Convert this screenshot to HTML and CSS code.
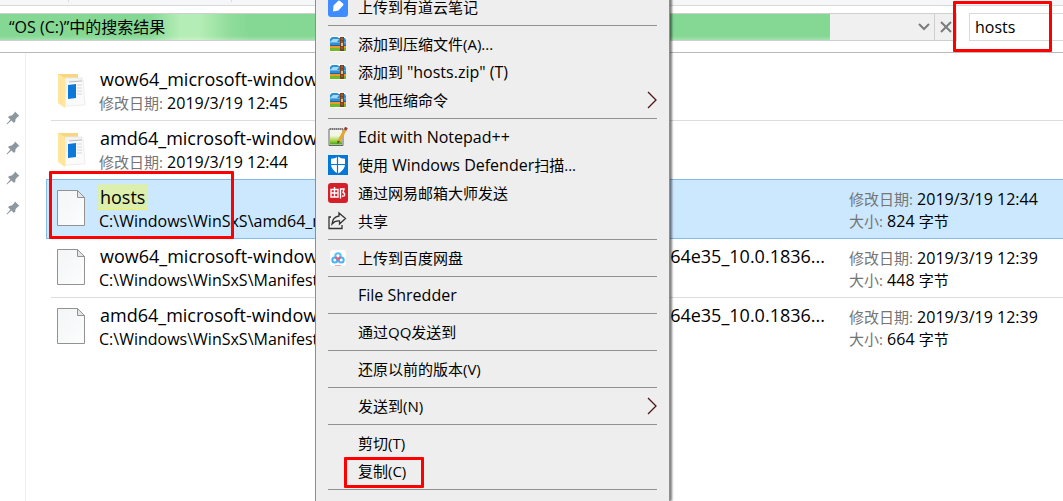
FILE: index.html
```html
<!DOCTYPE html>
<html lang="zh-CN">
<head>
    <meta charset="UTF-8">
    <meta name="viewport" content="width=device-width, initial-scale=1.0">
    <title>hosts - 搜索结果</title>
    <link rel="stylesheet" href="styles.css">
</head>
<body>

<!-- shared icons -->
<svg class="sprite" aria-hidden="true">
    <symbol id="pin" viewBox="0 0 14 14">
        <path d="M9 0.5 13.5 5 12 5.6 9.5 8.2 9.2 11 7.8 11.8 5.4 9.4 1 13.4 0.5 13 4.4 8.4 2.2 6.2 3 5 5.8 4.6 8.4 2Z" fill="#8d979e"/>
    </symbol>
    <symbol id="folder" viewBox="0 0 30 36">
        <path d="M1 1h20v27L7 34 1 29Z" fill="#f6d680"/>
        <path d="M8 5 25 5 25 29 8 31Z" fill="#f4f5f6" stroke="#e6e8ea"/>
        <path d="M10 8 26 7 28 32 8 33Z" fill="#fbfbfb" stroke="#eceeef"/>
        <path d="M12 9 25 8" stroke="#b9bdc0"/>
        <path d="M20 12h5M20 15h5M20 18h5M20 21h5" stroke="#d3d6d9"/>
        <path d="M11 12 19 11V25L11 26Z" fill="#0c78d8"/>
        <path d="M1 1 8 5V35L1 30Z" fill="#ffe69c"/>
    </symbol>
    <symbol id="file" viewBox="0 0 28 36">
        <linearGradient id="paper" x1="0" y1="0" x2="1" y2="1">
            <stop offset="0" stop-color="#f3f5f6"/>
            <stop offset="1" stop-color="#fcfdfd"/>
        </linearGradient>
        <path d="M0.5 0.5H20.5L27.5 7.5V35.5H0.5Z" fill="url(#paper)" stroke="#929292"/>
        <path d="M20.5 0.5V7.5H27.5Z" fill="#e6e6e6" stroke="#929292"/>
    </symbol>
    <symbol id="archive" viewBox="0 0 16 16">
        <path d="M0 0h16v16H0Z" fill="#f8f8f5"/>
        <path d="M0 3 2 1h5l2 1h6l1 2v6H0Z" fill="#2f8fd2"/>
        <path d="M0 6 3 3h6L7 6Z" fill="#a3dbf7"/>
        <path d="M0 6h16v1H0Z" fill="#5fb2e2"/>
        <path d="M0 9h16v1H0Z" fill="#1d66a3"/>
        <path d="M0 10h16v2H0Z" fill="#f09a2c"/>
        <path d="M0 12h16v3H0Z" fill="#6cb92a"/>
        <path d="M10 1h4v14h-4Z" fill="#7b401f"/>
        <path d="M12 2v12" stroke="#b9783f" stroke-dasharray="2 1"/>
        <path d="M11 7h2v3h-2Z" fill="#e0c18b"/>
    </symbol>
    <symbol id="arrow" viewBox="0 0 10 18">
        <path d="M1 1 9 9 1 17" fill="none" stroke="#4c1717" stroke-width="1.3"/>
    </symbol>
</svg>

<div class="explorer">
    <div class="ribbon"><i></i><i></i></div>

    <header class="toolbar">
        <div class="address">
            <div class="progress">“OS (C:)”中的搜索结果</div>
            <button class="history" aria-label="历史记录">
                <svg width="12" height="8" viewBox="0 0 12 8"><path d="M1 1 6 6 11 1" fill="none" stroke="#7c7c7c" stroke-width="2"/></svg>
            </button>
            <button class="stop" aria-label="停止">
                <svg width="12" height="12" viewBox="0 0 12 12"><path d="M1 1 11 11M11 1 1 11" fill="none" stroke="#7c7c7c" stroke-width="2"/></svg>
            </button>
        </div>
        <div class="search">
            <input type="text" value="hosts" aria-label="搜索">
            <div class="mark mark-search"></div>
        </div>
    </header>

    <main class="content">
        <nav class="sidebar">
            <svg><use href="#pin"/></svg>
            <svg><use href="#pin"/></svg>
            <svg><use href="#pin"/></svg>
            <svg><use href="#pin"/></svg>
        </nav>

        <ul class="results">
            <li class="row">
                <svg class="folder"><use href="#folder"/></svg>
                <div class="info">
                    <div class="name"><span>wow64_microsoft-window</span></div>
                    <div class="detail"><span class="label">修改日期:</span> 2019/3/19 12:45</div>
                </div>
            </li>
            <li class="row">
                <svg class="folder"><use href="#folder"/></svg>
                <div class="info">
                    <div class="name"><span>amd64_microsoft-window</span></div>
                    <div class="detail"><span class="label">修改日期:</span> 2019/3/19 12:44</div>
                </div>
            </li>
            <li class="row selected">
                <svg class="file"><use href="#file"/></svg>
                <div class="info">
                    <div class="name"><span class="match">hosts</span></div>
                    <div class="detail">C:\Windows\WinSxS\amd64_m</div>
                </div>
                <div class="meta">
                    <div><span class="label">修改日期:</span> 2019/3/19 12:44</div>
                    <div><span class="label">大小:</span> 824 <span class="unit">字节</span></div>
                </div>
                <div class="mark mark-file"></div>
            </li>
            <li class="row">
                <svg class="file"><use href="#file"/></svg>
                <div class="info">
                    <div class="name"><span>wow64_microsoft-window</span><span>64e35_10.0.1836...</span></div>
                    <div class="detail">C:\Windows\WinSxS\Manifest</div>
                </div>
                <div class="meta">
                    <div><span class="label">修改日期:</span> 2019/3/19 12:39</div>
                    <div><span class="label">大小:</span> 448 <span class="unit">字节</span></div>
                </div>
            </li>
            <li class="row">
                <svg class="file"><use href="#file"/></svg>
                <div class="info">
                    <div class="name"><span>amd64_microsoft-window</span><span>64e35_10.0.1836...</span></div>
                    <div class="detail">C:\Windows\WinSxS\Manifest</div>
                </div>
                <div class="meta">
                    <div><span class="label">修改日期:</span> 2019/3/19 12:39</div>
                    <div><span class="label">大小:</span> 664 <span class="unit">字节</span></div>
                </div>
            </li>
        </ul>
    </main>

    <div class="menu">
        <button class="item">
            <span class="icon"><svg width="20" height="20" viewBox="0 0 20 20"><rect width="20" height="20" rx="3" fill="#3f8cff"/><path d="M5 14.500 5.500 8.500 10 4Q11 3 12 4L15 6.500Q16 7.500 15 8.500L10.500 13.500Z" fill="#fff"/></svg></span>
            <span>上传到有道云笔记</span>
        </button>
        <hr>
        <button class="item">
            <span class="icon"><svg width="16" height="16"><use href="#archive"/></svg></span>
            <span>添加到压缩文件(A)...</span>
        </button>
        <button class="item">
            <span class="icon"><svg width="16" height="16"><use href="#archive"/></svg></span>
            <span>添加到 <span class="latin">"hosts.zip" (T)</span></span>
        </button>
        <button class="item">
            <span class="icon"><svg width="16" height="16"><use href="#archive"/></svg></span>
            <span>其他压缩命令</span>
            <svg class="more"><use href="#arrow"/></svg>
        </button>
        <hr>
        <button class="item">
            <span class="icon"><svg width="20" height="20" viewBox="0 0 20 20">
                <linearGradient id="npp" x1="0" y1="0" x2="0" y2="1"><stop offset="0.3" stop-color="#f2f6e4"/><stop offset="0.7" stop-color="#a3d642"/><stop offset="1" stop-color="#3f9e1c"/></linearGradient>
                <path d="M1 2H15V18.500H1Z" fill="#f4f4f0" stroke="#666"/>
                <path d="M2 5H14V17.500H2Z" fill="url(#npp)"/>
                <path d="M2 2H15" stroke="#777" stroke-width="2" stroke-dasharray="1 1"/>
                <path d="M17 3 11 14" stroke="#e5a82c" stroke-width="3"/>
                <path d="M18.500 0.500 17 3" stroke="#9c3836" stroke-width="3"/>
                <path d="M9.500 13.500 12 14.500 9.500 17Z" fill="#59451c"/>
            </svg></span>
            <span class="latin">Edit with Notepad++</span>
        </button>
        <button class="item">
            <span class="icon"><svg width="20" height="20" viewBox="0 0 20 20"><path d="M0 0h20v20H0Z" fill="#0078d7"/><path d="M10 1.500Q13 3.800 17 3.800V9Q17 15 10 18.500 3 15 3 9V3.800Q7 3.800 10 1.500Z" fill="#fff"/><path d="M9.500 1V19M2 9.500H18" stroke="#0078d7" stroke-width="1.200"/></svg></span>
            <span>使用 <span class="latin">Windows Defender</span>扫描...</span>
        </button>
        <button class="item">
            <span class="icon"><svg width="20" height="20" viewBox="0 0 20 20"><rect width="20" height="20" rx="3" fill="#d51f2b"/><path d="M3 6.500H10V14H3ZM6.500 4V14M3 10H10M12.500 15.500V6H16L15 9.500Q17 10 16.500 12.500 16 13.500 14 13" fill="none" stroke="#fff" stroke-width="1.400"/></svg></span>
            <span>通过网易邮箱大师发送</span>
        </button>
        <button class="item">
            <span class="icon"><svg width="20" height="20" viewBox="0 0 20 20"><path d="M3 6H1V17.500H14V14M11 2 17.500 7.500 11.500 13V10Q7 9.500 4 13 4.500 6 11 5Z" fill="none" stroke="#333" stroke-width="1.300"/></svg></span>
            <span>共享</span>
        </button>
        <hr>
        <button class="item">
            <span class="icon"><svg width="16" height="16" viewBox="0 0 16 16"><rect width="16" height="16" rx="3" fill="#fff"/><g fill="none" stroke-width="2"><circle cx="8" cy="6" r="2.700" stroke="#59c1f5"/><circle cx="4.800" cy="10" r="2.500" stroke="#45b4f4"/><circle cx="11.200" cy="10" r="2.500" stroke="#45b4f4"/><path d="M5.500 7 8 9.500 10.500 7" stroke="#ee5c78"/></g><path d="M5 15.500H11" stroke="#f4a5ae"/></svg></span>
            <span>上传到百度网盘</span>
        </button>
        <hr>
        <button class="item"><span class="icon"></span><span class="latin">File Shredder</span></button>
        <hr>
        <button class="item"><span class="icon"></span><span>通过QQ发送到</span></button>
        <hr>
        <button class="item"><span class="icon"></span><span>还原以前的版本(V)</span></button>
        <hr>
        <button class="item">
            <span class="icon"></span>
            <span>发送到(N)</span>
            <svg class="more"><use href="#arrow"/></svg>
        </button>
        <hr>
        <button class="item"><span class="icon"></span><span>剪切(T)</span></button>
        <button class="item"><span class="icon"></span><span>复制(C)</span><span class="mark mark-copy"></span></button>
        <hr>
    </div>
</div>

</body>
</html>
```
FILE: styles.css
```css
* {
    box-sizing: border-box;
}
body {
    margin: 0;
    font-family: "Open Sans", "Noto Sans CJK SC", sans-serif;
    font-size: 15px;
    line-height: 22px;
    color: #000;
    background: #fff;
}
button, input {
    font: inherit;
    color: inherit;
}
button {
    margin: 0;
    padding: 0;
    border: none;
    background: none;
}
svg {
    display: block;
    flex-shrink: 0;
}
.sprite {
    position: absolute;
    width: 0;
    height: 0;
}
.explorer {
    position: relative;
    height: 100vh;
    overflow: hidden;
}

/* top bars */
.ribbon {
    display: flex;
    height: 6px;
    background: #f5f6f7;
    border-bottom: 1px solid #d9dadb;
}
.ribbon i {
    width: 69px;
    height: 2px;
    border-right: 1px solid #dcdddf;
}
.ribbon i + i {
    width: 163px;
}
.toolbar {
    display: flex;
    gap: 12px;
    height: 47px;
    padding-top: 7px;
    border-bottom: 1px solid #b9b9b9;
}
.address {
    display: flex;
    flex: 1;
    height: 28px;
    border: 1px solid #cfcfcf;
    border-left: none;
    background: #f0f0f0;
}
.progress {
    flex: 1;
    padding-left: 9px;
    line-height: 26px;
    background:
        linear-gradient(to bottom, rgba(255, 255, 255, 0) 84%, rgba(255, 255, 255, 0.25)),
        linear-gradient(to right, #84d893 150px, #b4edb5 180px, #b4edb5 200px, #90dc9b 230px, #84d893 250px);
}
.history {
    display: flex;
    align-items: center;
    justify-content: flex-end;
    width: 105px;
    padding-right: 4px;
    border-right: 1px solid #cfcfcf;
}
.stop {
    display: flex;
    align-items: center;
    justify-content: center;
    width: 21px;
}
.search {
    position: relative;
    width: 94px;
}
.search input {
    width: 100%;
    height: 28px;
    padding: 0 5px;
    border: 1px solid #d9d9d9;
    border-right: none;
    background: #fff;
    outline: none;
}
.progress, .search input, .detail, .meta, .latin {
    font-size: 16px;
}

/* file list */
.content {
    display: flex;
    height: calc(100vh - 53px);
}
.sidebar {
    display: flex;
    flex-direction: column;
    gap: 16px;
    width: 26px;
    padding: 58px 0 0 6px;
    border-right: 1px solid #f0f0f0;
}
.sidebar svg {
    width: 14px;
    height: 14px;
}
.results {
    flex: 1;
    min-width: 0;
    margin: 0;
    padding: 9px 0 0 25px;
    list-style: none;
}
.row {
    position: relative;
    display: flex;
    height: 59px;
    padding-left: 6px;
    border-bottom: 1px solid #dcdcdc;
}
.row:last-child {
    border-bottom: none;
}
.row.selected {
    height: 60px;
    margin: -1px 0 0 -5px;
    padding-left: 10px;
    border: 1px solid #84bbe8;
    border-right: none;
    background: #cce8ff;
}
.folder {
    width: 30px;
    height: 36px;
    margin: 11px 12px 0 0;
}
.file {
    width: 28px;
    height: 36px;
    margin: 10px 14px 0 0;
}
.info {
    flex: 1;
    min-width: 0;
    padding: 5px 24px 0 0;
}
.name {
    display: flex;
    justify-content: space-between;
    padding-left: 1px;
    font-size: 18px;
    line-height: 25px;
    white-space: nowrap;
}
.detail {
    white-space: nowrap;
}
.match {
    margin-left: -3px;
    padding: 0 3px;
    border-radius: 2px;
    background: #dcefad;
    box-shadow: inset 0 0 0 1px #ecf36b;
}
.meta {
    width: 214px;
    padding-top: 8px;
}
.label {
    font-size: 15px;
    color: #757575;
}
.unit {
    font-size: 15px;
}

/* context menu */
.menu {
    position: absolute;
    top: -7px;
    bottom: 0;
    left: 315px;
    width: 355px;
    padding: 0 12px;
    border-left: 1px solid #8f8f8f;
    border-right: 1px solid #8f8f8f;
    background: #eee;
    box-shadow: 2px 0 2px rgba(0, 0, 0, 0.5);
    overflow: hidden;
}
.menu hr {
    height: 1px;
    margin: 4px 0;
    border: none;
    background: #919191;
}
.item {
    position: relative;
    display: flex;
    align-items: center;
    width: 100%;
    height: 28px;
    text-align: left;
}
.icon {
    display: flex;
    justify-content: center;
    width: 20px;
    margin-right: 10px;
}
.more {
    width: 10px;
    height: 18px;
    margin-left: auto;
}

/* red callouts */
.mark {
    position: absolute;
    border: 3px solid #f00;
    border-radius: 1px;
    pointer-events: none;
}
.mark-search {
    top: -12px;
    right: 11px;
    width: 99px;
    height: 51px;
}
.mark-file {
    top: -9px;
    left: 2px;
    width: 185px;
    height: 68px;
}
.mark-copy {
    top: 0;
    left: 16px;
    width: 80px;
    height: 31px;
}
```
